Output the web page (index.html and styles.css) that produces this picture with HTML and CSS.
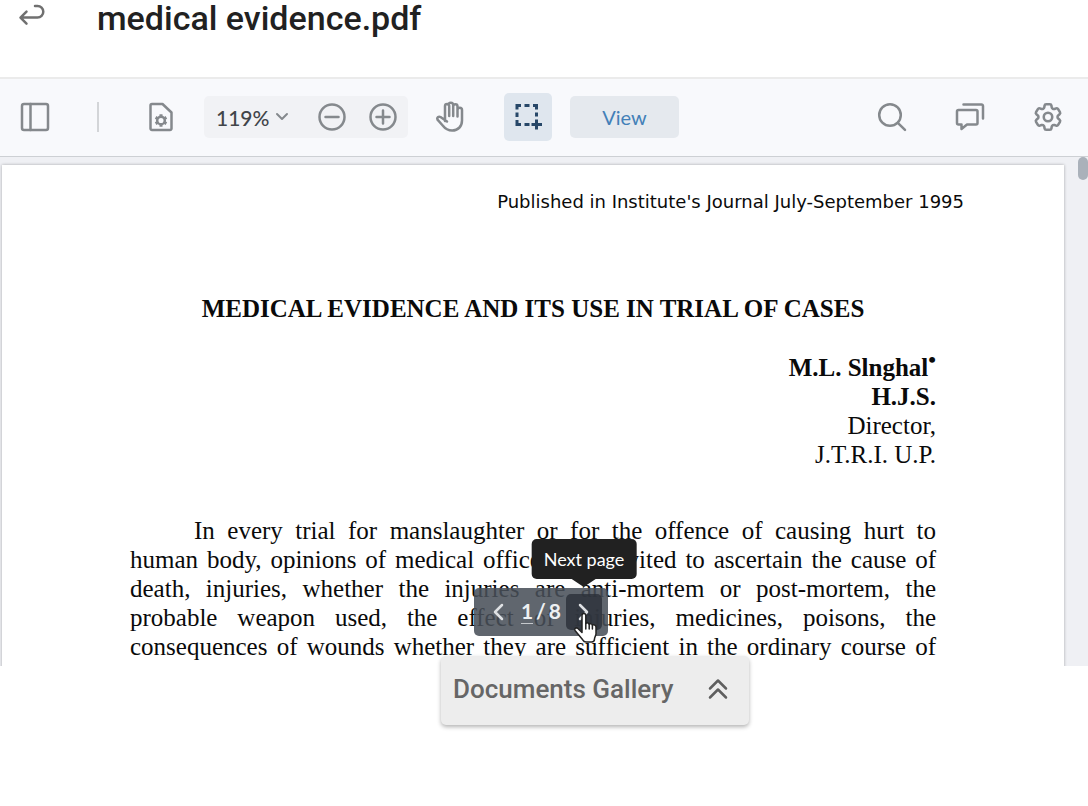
FILE: index.html
```html
<!DOCTYPE html>
<html lang="en">
<head>
    <meta charset="UTF-8">
    <meta name="viewport" content="width=device-width, initial-scale=1.0">
    <title>medical evidence.pdf</title>
    <link rel="stylesheet" href="styles.css">
</head>
<body>
    <header class="header">
        <button type="button" class="back-button" aria-label="Back">
            <svg width="28" height="24" viewBox="0 0 28 24"><path d="M17 2h2.500a5.800 5.800 0 0 1 0 11.600H3M8.500 7.600L2.500 13.600l6 6"/></svg>
        </button>
        <h1>medical evidence.pdf</h1>
    </header>

    <div class="toolbar">
        <button type="button" class="tool" aria-label="Sidebar">
            <svg width="30" height="30" viewBox="0 0 30 30"><rect x="2" y="2" width="26" height="26" rx="2"/><path d="M10.500 2v26"/></svg>
        </button>
        <span class="divider"></span>
        <button type="button" class="tool" aria-label="Document settings">
            <svg width="30" height="30" viewBox="0 0 30 30"><path d="M6 2h10.500L25.500 10.500V26.500a1.500 1.500 0 0 1-1.500 1.500H6a1.500 1.500 0 0 1-1.500-1.500V3.500A1.500 1.500 0 0 1 6 2z"/><circle cx="15" cy="18.500" r="3.800"/><path stroke-linecap="butt" stroke-width="3" d="M15 12.300v2.500M15 22.200v2.500M9.600 15.400l2.200 1.300M18.200 20.300l2.200 1.300M9.600 21.600l2.200-1.300M18.200 16.700l2.200-1.300"/></svg>
        </button>
        <div class="zoom-group">
            <select class="zoom-select" aria-label="Zoom level">
                <option>119%</option>
                <option>100%</option>
                <option>50%</option>
            </select>
            <svg class="chevron" width="14" height="10" viewBox="0 0 14 10"><path d="M2 2l5 5 5-5"/></svg>
            <div class="zoom-buttons">
                <button type="button" aria-label="Zoom out">
                    <svg width="30" height="30" viewBox="0 0 30 30"><circle cx="15" cy="15" r="12.500"/><path d="M8.500 15h13"/></svg>
                </button>
                <button type="button" aria-label="Zoom in">
                    <svg width="30" height="30" viewBox="0 0 30 30"><circle cx="15" cy="15" r="12.500"/><path d="M8.500 15h13M15 8.500v13"/></svg>
                </button>
            </div>
        </div>
        <button type="button" class="tool" aria-label="Pan">
            <svg width="30" height="32" viewBox="0 0 30 32"><path d="M10 20V5a2.100 2.100 0 0 1 4.200 0V15M13.500 4a2.200 2.200 0 0 1 4.700 0V15M18.200 5.500a2.100 2.100 0 0 1 4.300 0V15.500M22.500 9a2.200 2.200 0 0 1 4.500 0V19.500c0 6-4 10-9.800 10-4.700 0-7.200-2-9.500-5L2.500 18.700c-1-1.900 1-3.700 3-2.700l6.500 4.500"/></svg>
        </button>
        <button type="button" class="tool tool-active" aria-label="Select area">
            <svg width="30" height="30" viewBox="0 0 30 30"><path d="M4 7.500V3.500H8M11.500 3.500h5M20 3.500h3.500V7.500M23.500 10.500v4M4 10.500v4.500M4 18v4.500H8M11.500 22.500h5M23.500 17.500v10M18.500 22.500h10.500"/></svg>
        </button>
        <button type="button" class="view-button">View</button>
        <div class="toolbar-right">
            <button type="button" class="tool" aria-label="Search">
                <svg width="30" height="30" viewBox="0 0 30 30"><circle cx="13" cy="13" r="10.800"/><path d="M20.800 20.800l7.200 7"/></svg>
            </button>
            <button type="button" class="tool" aria-label="Comments">
                <svg width="30" height="30" viewBox="0 0 30 30"><path d="M3.500 8H21a1.500 1.500 0 0 1 1.500 1.500V21a1.500 1.500 0 0 1-1.500 1.500H12L6.500 27v-4.500h-3A1.500 1.500 0 0 1 2 21V9.500A1.500 1.500 0 0 1 3.500 8zM8.500 2.500h18A1.500 1.500 0 0 1 28 4v12.500"/></svg>
            </button>
            <button type="button" class="tool" aria-label="Settings">
                <svg class="gear" width="34" height="34" viewBox="0 0 24 24"><path d="M9.594 3.940c.09-.542.56-.94 1.110-.94h2.593c.55 0 1.020.398 1.110.94l.213 1.281c.063.374.313.686.645.87.074.04.147.083.22.127.325.196.72.257 1.075.124l1.217-.456a1.125 1.125 0 0 1 1.370.49l1.296 2.247a1.125 1.125 0 0 1-.26 1.431l-1.003.827c-.293.241-.438.613-.43.992a7.723 7.723 0 0 1 0 .255c-.008.378.137.75.43.991l1.004.827c.424.35.534.955.26 1.430l-1.298 2.247a1.125 1.125 0 0 1-1.369.491l-1.217-.456c-.355-.133-.75-.072-1.076.124a6.470 6.470 0 0 1-.22.128c-.331.183-.581.495-.644.869l-.213 1.281c-.09.543-.56.94-1.110.94h-2.594c-.55 0-1.019-.398-1.110-.94l-.213-1.281c-.062-.374-.312-.686-.644-.87a6.520 6.520 0 0 1-.22-.127c-.325-.196-.72-.257-1.076-.124l-1.217.456a1.125 1.125 0 0 1-1.369-.49l-1.297-2.247a1.125 1.125 0 0 1 .26-1.431l1.004-.827c.292-.24.437-.613.43-.991a6.932 6.932 0 0 1 0-.255c.007-.38-.138-.751-.43-.992l-1.004-.827a1.125 1.125 0 0 1-.26-1.430l1.297-2.247a1.125 1.125 0 0 1 1.370-.491l1.216.456c.356.133.751.072 1.076-.124.072-.044.146-.086.22-.128.332-.183.582-.495.644-.869l.214-1.280z"/><circle cx="12" cy="12" r="3"/></svg>
            </button>
        </div>
    </div>

    <main class="viewer">
        <article class="page">
            <p class="source">Published in Institute's Journal July-September 1995</p>
            <h2>MEDICAL EVIDENCE AND ITS USE IN TRIAL OF CASES</h2>
            <div class="author">
                <strong>M.L. Slnghal<sup>•</sup></strong><br>
                <strong>H.J.S.</strong><br>
                Director,<br>
                J.T.R.I. U.P.
            </div>
            <p class="content">
                In every trial for manslaughter or for the offence of causing hurt to<br>
                human body, opinions of medical officers are invited to ascertain the cause of<br>
                death, injuries, whether the injuries are anti-mortem or post-mortem, the<br>
                probable weapon used, the effect of injuries, medicines, poisons, the<br>
                consequences of wounds whether they are sufficient in the ordinary course of<br>
                nature to cause death also how soon it came and the number of the hurt
            </p>
        </article>
        <span class="scroll-thumb"></span>

        <div class="pager-area">
            <div class="pager">
                <button type="button" class="pager-button" aria-label="Previous page">
                    <svg width="12" height="18" viewBox="0 0 12 18"><path d="M10 2L3 9l7 7"/></svg>
                </button>
                <span class="page-count"><input type="text" class="page-input" value="1" aria-label="Page number"><span>/</span><span>8</span></span>
                <button type="button" class="pager-button pager-next" aria-label="Next page">
                    <svg width="12" height="18" viewBox="0 0 12 18"><path d="M2 2l7 7-7 7"/></svg>
                    <span class="tooltip">Next page</span>
                </button>
                <svg class="cursor" width="26" height="32" viewBox="0 0 26 32"><path d="M9 3.500c0-2.600 3.800-2.600 3.800 0v8c.8-1 3-.8 3.400.7 1-.8 2.900-.4 3.200 1 1.500-.9 3.600 0 3.600 2v6.500c0 2-1.500 3.300-1.500 5.300 0 1.800-1.200 3-3 3h-5.500c-1.500 0-2.500-.8-3.300-2.200L2 18.500c-1-1.900 1.200-3.500 2.900-2L9 20.500z"/><path d="M12.800 11.500V17M16.200 12.500V17M19.400 13.500V17"/></svg>
            </div>
        </div>
    </main>

    <footer class="footer">
        <button type="button" class="gallery-button">
            Documents Gallery
            <svg width="22" height="22" viewBox="0 0 22 22"><path d="M3 10.500l8-8 8 8M3 19.500l8-8 8 8"/></svg>
        </button>
    </footer>
</body>
</html>
```

FILE: styles.css
```css
* {
    box-sizing: border-box;
}
body {
    margin: 0;
    height: 100vh;
    display: flex;
    flex-direction: column;
    overflow: hidden;
    background-color: #ffffff;
    font-family: Lato, sans-serif;
}
button {
    border: none;
    padding: 0;
    background: none;
    font-family: inherit;
    cursor: pointer;
}
svg {
    display: block;
    flex: none;
    fill: none;
    stroke: #85898d;
    stroke-width: 2.5;
    stroke-linecap: round;
    stroke-linejoin: round;
}

/* Header */
.header {
    flex: none;
    height: 79px;
    display: flex;
    align-items: flex-start;
    gap: 51px;
    padding-left: 18px;
    border-bottom: 2px solid #ebebeb;
}
.back-button {
    padding-top: 4px;
}
.back-button svg {
    stroke: #707070;
}
h1 {
    margin: 0;
    font-family: Roboto, sans-serif;
    font-size: 34px;
    font-weight: 500;
    line-height: 36px;
    color: #212121;
}

/* Toolbar */
.toolbar {
    flex: none;
    height: 78px;
    display: flex;
    align-items: center;
    padding: 0 16px 1px 11px;
    background-color: #f8f9fc;
    border-bottom: 1px solid #cdd0d4;
}
.tool {
    width: 48px;
    height: 48px;
    display: flex;
    align-items: center;
    justify-content: center;
    border-radius: 5px;
}
.divider {
    width: 2px;
    height: 30px;
    margin: 0 38px;
    background-color: #d3d5d8;
}
.zoom-group {
    width: 204px;
    height: 42px;
    display: flex;
    align-items: center;
    margin: 0 18px 0 19px;
    padding: 0 10px 0 12px;
    border-radius: 5px;
    background-color: #f1f2f5;
}
.zoom-select {
    width: 59px;
    padding: 0;
    border: none;
    appearance: none;
    background: none;
    font-family: inherit;
    font-size: 21px;
    font-weight: 500;
    color: #414549;
}
.chevron {
    stroke-width: 2;
}
.zoom-buttons {
    display: flex;
    gap: 21px;
    margin-left: auto;
}
.tool-active {
    margin: 0 18px 0 30px;
    background-color: #dfe6ee;
}
.tool-active svg {
    stroke: #274768;
    stroke-width: 3;
    stroke-linecap: butt;
    stroke-linejoin: miter;
}
.gear {
    stroke-width: 1.8;
}
.view-button {
    width: 109px;
    height: 42px;
    border-radius: 5px;
    background-color: #e5e9ee;
    font-size: 20px;
    color: #4380b8;
}
.toolbar-right {
    display: flex;
    gap: 30px;
    margin-left: auto;
}

/* Document */
.viewer {
    position: relative;
    flex: 1;
    min-height: 0;
    overflow: hidden;
    padding: 8px 24px 0 2px;
    background-color: #eff0f4;
}
.page {
    padding: 22px 128px 0;
    background-color: #ffffff;
    box-shadow: 0 0 3px rgba(0, 0, 0, 0.3);
    font-family: "Liberation Serif", serif;
    font-size: 25px;
    line-height: 29px;
    color: #0a0a0a;
}
.source {
    margin: 0 -28px 0 0;
    text-align: right;
    font-family: "DejaVu Sans", sans-serif;
    font-size: 18px;
}
h2 {
    margin: 78px 0 30px;
    text-align: center;
    font-size: 25px;
    line-height: 29px;
}
.author {
    text-align: right;
}
.author sup {
    font-size: 22px;
    line-height: 0;
}
.content {
    margin: 47px 0 0;
    text-align: justify;
    text-align-last: justify;
    text-indent: 64px;
}
.scroll-thumb {
    position: absolute;
    top: 0;
    right: 0;
    width: 10px;
    height: 23px;
    border-radius: 5px;
    background-color: #aab1ba;
}

/* Page navigation */
.pager-area {
    position: absolute;
    left: 0;
    right: 6px;
    bottom: 30px;
    display: flex;
    justify-content: center;
}
.pager {
    position: relative;
    display: flex;
    align-items: center;
    padding: 6px;
    border-radius: 5px;
    background-color: rgba(72, 79, 88, 0.87);
}
.pager-button {
    position: relative;
    width: 36px;
    height: 36px;
    display: flex;
    align-items: center;
    justify-content: center;
    border-radius: 5px;
}
.pager-button svg {
    stroke: #dfe1e4;
}
.pager-next {
    background-color: rgba(42, 47, 56, 0.8);
}
.page-count {
    width: 50px;
    display: flex;
    justify-content: center;
    gap: 3px;
    padding-bottom: 2px;
    font-size: 21px;
    font-weight: bold;
    line-height: 24px;
    color: #eef0f2;
}
.page-input {
    width: 12px;
    height: 25px;
    padding: 0;
    border: none;
    border-bottom: 1px solid #c5c8cc;
    background: none;
    font: inherit;
    color: inherit;
}
.tooltip {
    position: absolute;
    bottom: 51px;
    left: 50%;
    transform: translateX(-50%);
    padding: 0 12px;
    border-radius: 5px;
    background-color: #212121;
    font-size: 18px;
    line-height: 40px;
    white-space: nowrap;
    color: #ffffff;
}
.tooltip::after {
    content: "";
    position: absolute;
    top: 100%;
    left: 50%;
    margin-left: -12px;
    border: 12px solid transparent;
    border-top: 8px solid #212121;
    border-bottom: none;
}
.cursor {
    position: absolute;
    top: 24px;
    right: 9px;
    fill: #ffffff;
    stroke: #222222;
    stroke-width: 1.5;
}

/* Gallery */
.footer {
    flex: none;
    height: 140px;
    padding-left: 441px;
}
.gallery-button {
    position: relative;
    width: 308px;
    height: 69px;
    margin-top: -10px;
    padding: 0 20px 3px 12px;
    display: flex;
    align-items: center;
    justify-content: space-between;
    border-radius: 5px;
    background-color: #ededed;
    box-shadow: 0 2px 4px rgba(0, 0, 0, 0.3);
    font-family: Roboto, sans-serif;
    font-size: 26px;
    font-weight: 500;
    color: #666666;
}
.gallery-button svg {
    stroke: #5f5f5f;
}
```
